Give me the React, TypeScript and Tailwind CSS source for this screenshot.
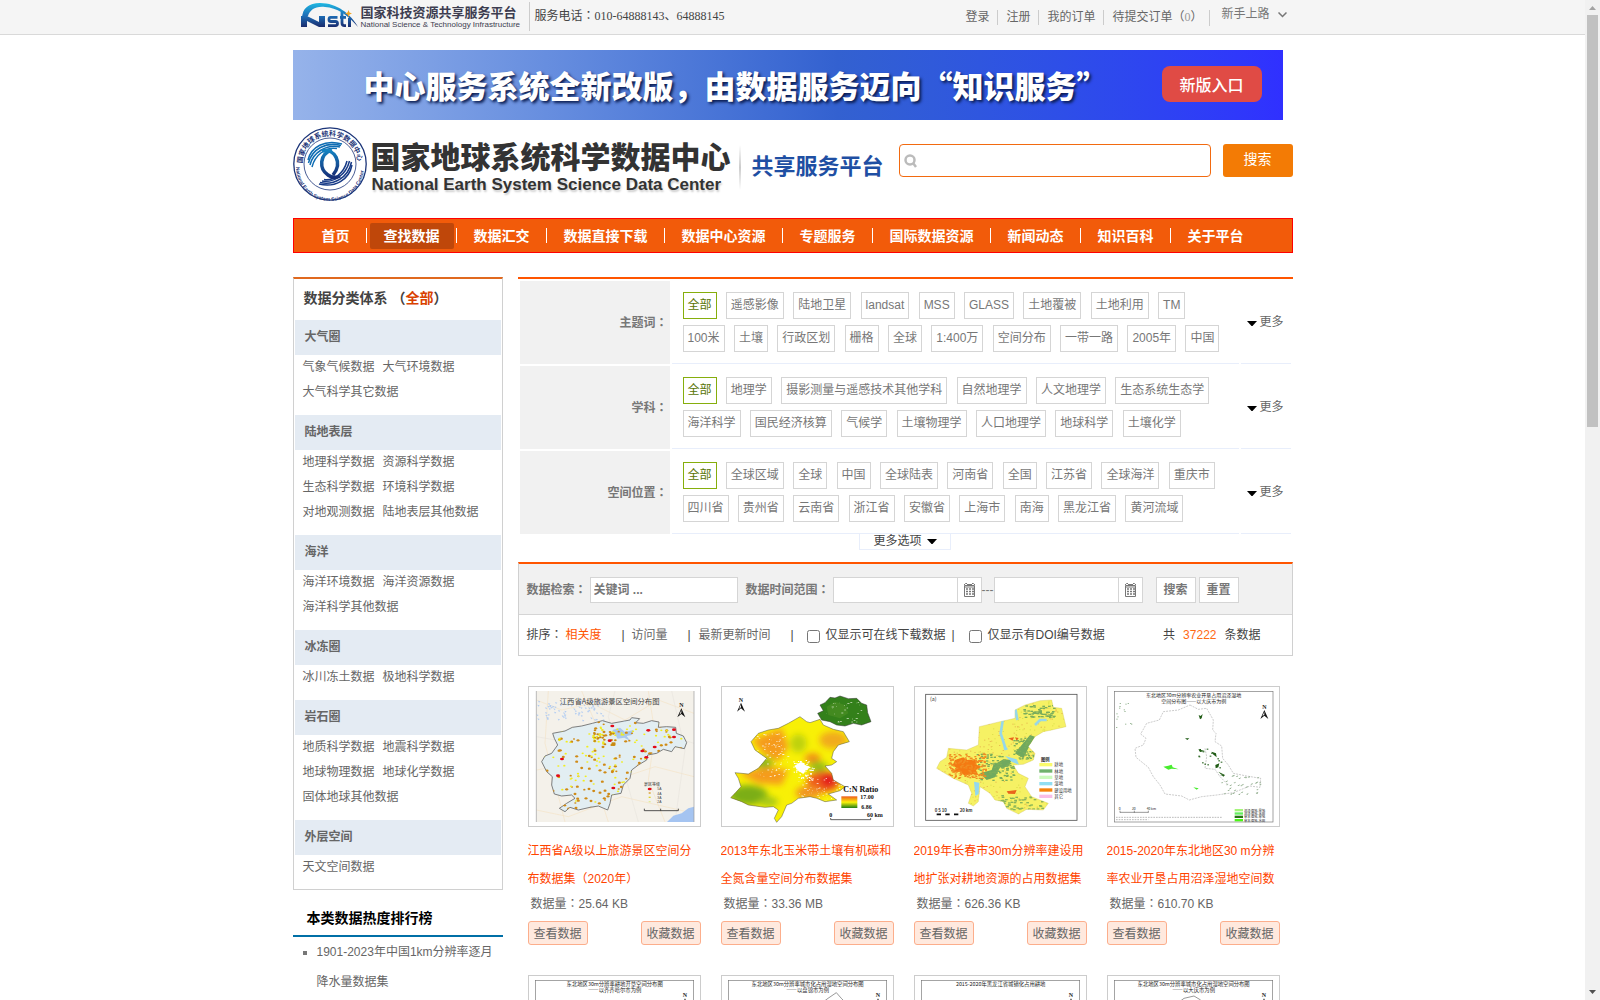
import React from "react";

function dots(seed: number, n: number, x: number, y: number, w: number, h: number) {
  let s = seed;
  const next = () => {
    s = (s * 16807) % 2147483647;
    return s / 2147483647;
  };
  return Array.from({ length: n }, () => [Math.round(x + next() * w), Math.round(y + next() * h), next()]);
}

const sans = "font-['Liberation_Sans','Noto_Sans_CJK_SC',sans-serif]";
const serif = "font-['Liberation_Serif','Noto_Sans_CJK_SC',serif]";
const cjk = "font-['Noto_Sans_CJK_SC',sans-serif]";

const nav = ["首页", "查找数据", "数据汇交", "数据直接下载", "数据中心资源", "专题服务", "国际数据资源", "新闻动态", "知识百科", "关于平台"];

const categories: { name: string; items: string[] }[] = [
  { name: "大气圈", items: ["气象气候数据", "大气环境数据", "大气科学其它数据"] },
  { name: "陆地表层", items: ["地理科学数据", "资源科学数据", "生态科学数据", "环境科学数据", "对地观测数据", "陆地表层其他数据"] },
  { name: "海洋", items: ["海洋环境数据", "海洋资源数据", "海洋科学其他数据"] },
  { name: "冰冻圈", items: ["冰川冻土数据", "极地科学数据"] },
  { name: "岩石圈", items: ["地质科学数据", "地震科学数据", "地球物理数据", "地球化学数据", "固体地球其他数据"] },
  { name: "外层空间", items: ["天文空间数据"] },
];

const filters: { label: string; rows: string[][] }[] = [
  {
    label: "主题词：",
    rows: [
      ["全部", "遥感影像", "陆地卫星", "landsat", "MSS", "GLASS", "土地覆被", "土地利用", "TM"],
      ["100米", "土壤", "行政区划", "栅格", "全球", "1:400万", "空间分布", "一带一路", "2005年", "中国"],
    ],
  },
  {
    label: "学科：",
    rows: [
      ["全部", "地理学", "摄影测量与遥感技术其他学科", "自然地理学", "人文地理学", "生态系统生态学"],
      ["海洋科学", "国民经济核算", "气候学", "土壤物理学", "人口地理学", "地球科学", "土壤化学"],
    ],
  },
  {
    label: "空间位置：",
    rows: [
      ["全部", "全球区域", "全球", "中国", "全球陆表", "河南省", "全国", "江苏省", "全球海洋", "重庆市"],
      ["四川省", "贵州省", "云南省", "浙江省", "安徽省", "上海市", "南海", "黑龙江省", "黄河流域"],
    ],
  },
];

function NstiMark() {
  return (
    <svg width="60" height="26" viewBox="0 0 60 26" aria-label="Nsti" role="img">
      <defs>
        <linearGradient id="nsti" gradientUnits="userSpaceOnUse" x1="0" y1="0" x2="0" y2="25">
          <stop offset="0" stopColor="#1fb8e2" />
          <stop offset=".5" stopColor="#1d6fb8" />
          <stop offset="1" stopColor="#1a2566" />
        </linearGradient>
      </defs>
      <path d="M1 16 C1 5 8 0 19 0 C36 0 50 11 57 24 C46 11 36 5 24 4 C14 3 9 7 7 13 Z" fill="url(#nsti)" />
      <path d="M0 13 H6 L18 19 V13 H24 V24 H18 L6 18 V24 H0 Z" fill="url(#nsti)" />
      <path d="M36.500 14.400 H29.500 Q28 14.400 28 16.400 Q28 18.500 30 18.500 H34.500 Q36.500 18.500 36.500 20.600 Q36.500 22.600 34.500 22.600 H27" fill="none" stroke="url(#nsti)" strokeWidth="2.800" />
      <path d="M41 9 V20 Q41 22.600 43.500 22.600 H45 M39 14.400 H45" fill="none" stroke="url(#nsti)" strokeWidth="2.800" />
      <path d="M47 15 H50 V24 H47 Z" fill="url(#nsti)" />
      <path d="M47.500 7 L48.500 9.500 L51 10.500 L48.500 11.500 L47.500 14 L46.500 11.500 L44 10.500 L46.500 9.500 Z" fill="#f5a623" />
    </svg>
  );
}

function Emblem() {
  return (
    <svg width="74" height="74" viewBox="0 0 74 74" role="img" aria-label="国家地球系统科学数据中心" className="shrink-0 overflow-visible">
      <defs>
        <linearGradient id="globe" x1="0" y1="0" x2="0" y2="1">
          <stop offset="0" stopColor="#1583c2" />
          <stop offset="1" stopColor="#152e78" />
        </linearGradient>
        <path id="arcTop" d="M9.500 36.500 A27.500 27.500 0 0 1 64.500 36.500 L64.500 40" />
        <path id="arcBottom" d="M3 40 A34 34 0 0 0 71 40 L71 34" />
      </defs>
      <circle cx="37" cy="37" r="36.200" fill="#fff" stroke="#1b3478" strokeWidth="1.300" />
      <circle cx="37" cy="37" r="26" fill="#fff" stroke="#1b3478" strokeWidth="0.800" />
      <text fontSize="7" fontWeight="700" fill="#1b3478" fontFamily="Noto Sans CJK SC"><textPath href="#arcTop">国家地球系统科学数据中心</textPath></text>
      <text fontSize="5" fontWeight="700" fill="#1b3478" fontFamily="Liberation Sans"><textPath href="#arcBottom">National Earth System Science Data Center</textPath></text>
      <g fill="none" stroke="#0f6db3" strokeWidth="1.500">
        <path d="M15 33 C18 20 32 12 49 17" />
        <path d="M15.500 36 C19 22 33 14.500 48 18.500" />
        <path d="M17 38 C20 25 34 17 47 20" />
        <path d="M19 40 C22 28 33 19.500 44 21.500" />
      </g>
      <g fill="none" stroke="#173a86" strokeWidth="1.500">
        <path d="M59 38 C56 53 42 61 26 57" />
        <path d="M58.500 35 C55 51 41 58.500 27 55.500" />
        <path d="M56.500 34 C53 48 41 56 29 54" />
        <path d="M54 34 C51 46 41 54 31 52.500" />
      </g>
      <path d="M39 23 C26 27 26 42 35 48 C39 51 43 51 47 49" fill="none" stroke="url(#globe)" strokeWidth="3.500" />
      <path d="M29 24 C42 21 50 36 40 48" fill="none" stroke="url(#globe)" strokeWidth="3.500" />
    </svg>
  );
}

function North({ x, y }: { x: number; y: number }) {
  return (
    <g transform={`translate(${x} ${y})`}>
      <text x="0" y="0" fontSize="18" textAnchor="middle" fill="#222" fontFamily="Liberation Serif" fontWeight="700">N</text>
      <path d="M0 3 L12 30 L0 20 L-12 30 Z M0 8 L-6 22 L0 17 Z" fill="#111" fillRule="evenodd" />
    </g>
  );
}

const jiangxi = "M113 190 L150 183 L172 172 L200 168 L232 160 L262 152 L290 160 L318 155 L345 150 L350 143 L374 146 L362 158 L385 160 L410 152 L432 156 L430 172 L455 170 L482 172 L484 190 L505 198 L515 218 L508 236 L480 230 L470 245 L445 238 L425 250 L398 255 L395 270 L370 285 L350 300 L345 325 L325 345 L318 370 L290 375 L285 400 L278 420 L250 408 L225 412 L190 420 L165 412 L150 425 L133 415 L155 400 L180 385 L170 375 L140 378 L118 372 L110 345 L112 320 L95 305 L80 275 L90 258 L110 250 L128 225 L118 205 Z";

function JiangxiMap() {
  return (
    <svg className="h-full w-full" viewBox="42 51 513 417" preserveAspectRatio="none" role="img" aria-label="江西省A级旅游景区空间分布图">
      <defs>
        <clipPath id="jx"><path d={jiangxi} /></clipPath>
        <clipPath id="jxFrame"><rect x="64" y="63" width="473" height="393" /></clipPath>
      </defs>
      <g clipPath="url(#jxFrame)">
        <rect x="64" y="63" width="473" height="393" fill="#f4f1ea" />
        <g fill="none" stroke="#f4dfba" strokeWidth="1.500">
          <path d="M64 90 L140 120 L230 100 L330 150 L430 90 L537 130 M64 300 L180 280 L300 330 L420 290 L537 320 M200 63 L250 180 L230 300 L280 456 M400 63 L420 190 L400 330 L450 456 M64 420 L160 440 L320 380 L537 430 M100 63 L90 220 L150 456" />
          <path d="M470 63 L510 240 L480 456 M64 200 L180 220 L380 170 L537 220 M300 63 L280 140 L370 456" stroke="#e4e0da" />
        </g>
        <path d="M456 456 L475 437 L500 430 L520 415 L537 410 V456 Z" fill="#a5c4f1" />
        {dots(51, 75, 64, 90, 200, 60).map(([x, y], i) => <path key={i} d={`M${x} ${y} l7 2 l-4 4`} fill="#b3cdf2" />)}
        <path d={jiangxi} fill="#e2eef2" stroke="#666" strokeWidth="2.500" />
        <g clipPath="url(#jx)">
          <path d="M292 180 L315 173 L330 186 L355 180 L350 195 L335 198 L345 212 L328 203 L308 206 Z M300 145 L325 138 L330 155 Z" fill="#a9c8ef" />
          {dots(7, 330, 82, 150, 425, 275).map(([x, y, r], i) => (
            <ellipse key={i} cx={x} cy={y} rx={r > 0.6 ? 4.5 : 3.5} ry={r > 0.6 ? 3.5 : 2.5} fill={r > 0.45 ? "#cf8a16" : "#f2ee1c"} />
          ))}
          {dots(19, 40, 235, 180, 70, 45).map(([x, y], i) => <ellipse key={i} cx={x} cy={y} rx="4" ry="3" fill={i % 3 ? "#c98a10" : "#eee81d"} />)}
        </g>
        {[[292, 168], [400, 181], [477, 179], [284, 212], [477, 201], [419, 231], [382, 243], [141, 267], [394, 262], [129, 317], [295, 354], [404, 357]].map(([x, y]) => <ellipse key={x + y} cx={x} cy={y} rx="6" ry="4" fill="#e20a17" />)}
        <text x="284" y="103" fontSize="22" textAnchor="middle" fill="#444" fontFamily="Noto Sans CJK SC">江西省A级旅游景区空间分布图</text>
        <North x={499} y={112} />
        <text x="387" y="348" fontSize="12" fill="#333" fontFamily="Noto Sans CJK SC">景区等级</text>
        {["5A", "4A", "3A", "2A"].map((t, i) => (
          <g key={t}>
            {i > 0 && <rect x="401" y={354 + i * 13} width="6" height="4" fill={["", "#d79a21", "#ddd32c", "#e4ed98"][i]} />}
            <text x="427" y={361 + i * 13} fontSize="10" fill="#444" fontFamily="Liberation Sans">{t}</text>
          </g>
        ))}
        <path d="M388 422 H490 M388 416 V422 M437 416 V422 M490 416 V422" stroke="#333" strokeWidth="2.500" />
      </g>
      <path d="M64 456 V63 M537 63 V456" stroke="#999" strokeWidth="2" />
    </svg>
  );
}

const corn = "M855 140 L875 155 L885 158 L915 148 L925 165 L955 178 L985 185 L1003 215 L970 225 L955 245 L950 265 L965 275 L950 285 L930 288 L950 310 L955 330 L990 350 L975 362 L940 372 L965 390 L930 395 L905 385 L885 380 L850 385 L830 400 L815 405 L800 440 L785 457 L778 445 L790 420 L775 410 L750 412 L700 405 L680 395 L647 383 L660 370 L678 350 L670 325 L660 308 L700 312 L730 295 L755 265 L720 240 L708 215 L730 190 L760 180 L790 175 L820 160 Z";
const cornHead = "M915 105 L930 98 L945 82 L960 84 L975 78 L1000 86 L1025 85 L1040 100 L1055 105 L1058 128 L1068 155 L1040 165 L1015 160 L990 168 L965 165 L945 155 L920 150 L908 130 L925 122 Z";

function CornBeltMap() {
  return (
    <svg className="h-full w-full" viewBox="621 51 513 417" preserveAspectRatio="none" role="img" aria-label="C:N Ratio">
      <defs>
        <clipPath id="cb"><path d={corn} /></clipPath>
        <filter id="soft"><feGaussianBlur stdDeviation="9" /></filter>
        <linearGradient id="ratio" x1="0" y1="0" x2="0" y2="1">
          <stop offset="0" stopColor="#ef5a1a" /><stop offset=".5" stopColor="#fbf20a" /><stop offset="1" stopColor="#1f7d14" />
        </linearGradient>
      </defs>
      <path d={cornHead} fill="#33801a" stroke="#333" strokeWidth="1.500" />
      <path d="M935 110 L960 95 L990 105 L1000 130 L975 145 L940 135 Z" fill="#438a20" />
      <g clipPath="url(#cb)">
        <rect x="640" y="130" width="370" height="330" fill="#f8f006" />
        <g filter="url(#soft)">
          <path d="M710 210 L800 175 L820 230 L790 275 L745 250 Z M670 310 L760 290 L820 300 L800 345 L730 340 Z" fill="#f59b1b" />
          <ellipse cx="955" cy="210" rx="42" ry="26" fill="#f1ab1c" />
          <ellipse cx="893" cy="265" rx="24" ry="15" fill="#f08d18" />
          <ellipse cx="925" cy="335" rx="50" ry="32" fill="#ee5b1e" />
          <ellipse cx="940" cy="330" rx="22" ry="20" fill="#e3171b" />
          <ellipse cx="880" cy="368" rx="38" ry="20" fill="#f19422" />
          <ellipse cx="700" cy="375" rx="58" ry="30" fill="#7cae15" />
          <ellipse cx="745" cy="278" rx="30" ry="15" fill="#84b71a" />
          <ellipse cx="850" cy="220" rx="25" ry="28" fill="#bfd20d" />
          <ellipse cx="910" cy="290" rx="28" ry="15" fill="#8fc016" />
          <ellipse cx="760" cy="395" rx="30" ry="15" fill="#a6c812" />
        </g>
        <path d="M838 288 L858 275 L870 285 L888 292 L872 300 L865 312 L850 302 Z" fill="#fff" />
        {dots(33, 60, 835, 270, 60, 60).map(([x, y], i) => <rect key={i} x={x} y={y} width="4" height="3" fill="#fff" />)}
        {dots(77, 110, 710, 190, 110, 130).map(([x, y, r], i) => <rect key={i} x={x} y={y} width={r * 6} height="2" fill="#fff" />)}
        {dots(99, 80, 850, 320, 140, 75).map(([x, y, r], i) => <rect key={i} x={x} y={y} width={r * 6} height="2" fill="#fff" />)}
      </g>
      {dots(12, 30, 935, 95, 105, 60).map(([x, y, r], i) => <rect key={i} x={x} y={y} width={r * 7} height="2" fill="#e5efd8" />)}
      <path d={corn} fill="none" stroke="#554" strokeWidth="1.500" />
      <North x={678} y={95} />
      <g fontFamily="Liberation Serif" fontWeight="700" fill="#111">
        <text x="985" y="365" fontSize="24">C:N Ratio</text>
        <text x="1036" y="388" fontSize="18">17.00</text>
        <text x="1039" y="417" fontSize="18">6.86</text>
        <text x="943" y="441" fontSize="18">0</text>
        <text x="1056" y="441" fontSize="18">60 km</text>
      </g>
      <rect x="979" y="379" width="48" height="35" fill="url(#ratio)" />
      <path d="M947 444 V449 H1067 V444" fill="none" stroke="#111" strokeWidth="2" />
    </svg>
  );
}

const changchun = "M455 90 L460 112 L485 115 L498 170 L455 180 L430 185 L405 200 L385 230 L405 250 L400 270 L370 283 L340 285 L355 310 L385 325 L375 350 L395 380 L445 400 L430 420 L380 418 L355 432 L320 415 L310 395 L285 390 L270 370 L240 350 L235 395 L220 408 L205 400 L215 370 L205 345 L160 325 L110 295 L120 275 L140 262 L145 235 L200 240 L235 225 L238 170 L300 155 L345 145 L345 120 L375 105 L420 92 Z";

function ChangchunMap() {
  const legend: [string, string][] = [["#fbfb6c", "耕地"], ["#70b26c", "林地"], ["#ccfbbd", "草地"], ["#91def2", "湿地"], ["#f5820c", "建设用地"], ["#f9bde8", "其它"]];
  return (
    <svg className="h-full w-full" viewBox="45 51 513 417" preserveAspectRatio="none" role="img" aria-label="长春市土地利用">
      <defs><clipPath id="cc"><path d={changchun} /></clipPath></defs>
      <rect x="77" y="73" width="454" height="378" fill="#fff" stroke="#555" strokeWidth="2.500" />
      <path d={changchun} fill="#f6f164" stroke="#c9bd55" />
      <g clipPath="url(#cc)">
        {dots(5, 600, 110, 90, 390, 340).map(([x, y, r], i) => <rect key={i} x={x} y={y} width="4" height="3" fill={r > 0.5 ? "#e9bf50" : "#dfe24d"} />)}
        <path d="M240 310 L275 300 L280 285 L310 268 L335 270 L325 290 L300 292 L285 322 L260 330 Z M345 250 L365 225 L390 195 L405 200 L385 235 L370 265 Z" fill="#70a95f" />
        {dots(23, 90, 230, 250, 110, 80).map(([x, y], i) => <rect key={i} x={x} y={y} width="7" height="4" fill="#7bae5b" />)}
        {dots(24, 60, 340, 200, 60, 65).map(([x, y], i) => <rect key={i} x={x} y={y} width="6" height="4" fill="#7bae5b" />)}
        {dots(28, 60, 370, 105, 90, 35).map(([x, y], i) => <rect key={i} x={x} y={y} width="8" height="4" fill="#7bae5b" />)}
        {dots(29, 60, 290, 375, 140, 45).map(([x, y], i) => <rect key={i} x={x} y={y} width="8" height="4" fill="#8ab559" />)}
        <path d="M308 152 L302 190 L310 215 L318 240 M345 110 L352 150 M405 165 L420 150 L440 150" fill="none" stroke="#97d7e8" strokeWidth="8" />
        <path d="M222 335 L238 338 L236 372 L226 378 Z M315 258 L350 268 L358 285 L335 275 Z M310 225 L325 238 L312 240 Z" fill="#93d8ef" />
        <path d="M165 270 L190 262 L200 270 L225 268 L230 285 L245 290 L228 300 L235 315 L215 312 L195 318 L180 305 L155 308 L170 295 L158 285 Z" fill="#f47a12" />
        {dots(41, 160, 145, 250, 110, 75).map(([x, y], i) => <rect key={i} x={x} y={y} width="6" height="4" fill="#f18d22" />)}
        <path d="M325 205 L342 202 L338 212 Z M345 202 L356 204 L350 212 Z M320 364 L350 360 L345 372 L325 371 Z" fill="#e9651d" />
      </g>
      <g fontFamily="Noto Sans CJK SC" fill="#333" fontSize="13">
        <text x="90" y="94" fontSize="16">(a)</text>
        <text x="423" y="273" fontWeight="700">图例</text>
        {legend.map(([c, t], i) => (
          <g key={t}>
            <rect x="418" y={279 + i * 19} width="39" height="10" fill={c} />
            <text x="463" y={289 + i * 19}>{t}</text>
          </g>
        ))}
        <text x="104" y="426" fontWeight="700">0 5 10</text>
        <text x="179" y="426" fontWeight="700">20 km</text>
      </g>
      <path d="M110 433 H187" stroke="#111" strokeWidth="5" strokeDasharray="13 13" />
    </svg>
  );
}

function WetlandMap() {
  return (
    <svg className="h-full w-full" viewBox="624 51 513 417" preserveAspectRatio="none" role="img" aria-label="东北地区湿地空间分布图">
      <rect x="643" y="64" width="476" height="392" fill="#fff" stroke="#777" strokeWidth="2" />
      <path d="M870 105 L895 118 L920 115 L940 150 L938 180 L948 190 L945 215 L965 228 L968 265 L985 285 L1000 310 L1040 318 L1082 325 L1080 352 L1050 348 L1000 368 L950 375 L905 380 L868 390 L845 378 L795 372 L780 345 L760 320 L745 292 L708 262 L705 235 L730 225 L738 205 L722 192 L740 160 L778 150 L790 125 L835 120 Z M915 235 L920 260 L915 295 L945 298 L960 320 L985 345" fill="none" stroke="#999" strokeWidth="1.500" strokeDasharray="6 3" />
      <g fill="#1f5b14">
        <path d="M896 135 L902 138 L908 132 L905 145 L900 148 Z M855 205 L868 205 L862 210 Z M895 238 L915 243 L900 246 Z M935 245 L948 250 L950 262 L938 252 Z M946 285 L958 280 L955 292 L947 295 Z M955 305 L975 315 L970 320 Z" />
        {dots(61, 35, 960, 315, 120, 60).map(([x, y], i) => <path key={i} d={`M${x} ${y} l8 -4 l-3 5 Z`} fill="#8aa886" />)}
        {dots(64, 14, 895, 230, 70, 65).map(([x, y], i) => <rect key={i} x={x} y={y} width="5" height="3" />)}
        {dots(68, 14, 648, 95, 50, 80).map(([x, y], i) => <rect key={i} x={x} y={y} width="4" height="3" fill="#9fbb9c" />)}
      </g>
      <path d="M790 290 L805 287 L815 284 L818 292 L836 298 L815 296 L805 299 Z M880 352 L896 355 L890 359 Z" fill="#48ec2e" />
      <g fontFamily="Noto Sans CJK SC" fill="#222" fontSize="15" textAnchor="middle">
        <text x="881" y="81">东北地区30m分辨率农业开垦占用沼泽湿地</text>
        <text x="881" y="99">空间分布图——以大庆市为例</text>
      </g>
      <North x={1093} y={117} />
      <g fontFamily="Noto Sans CJK SC" fill="#222" fontSize="10">
        <text x="656" y="419">0</text><text x="696" y="419">20</text><text x="740" y="419">40 km</text>
        {["沼泽湿地-旱地", "沼泽湿地-水田", "草本湿地-旱地", "草本湿地-水田"].map((t, i) => (
          <g key={t}>
            <rect x="1004" y={417 + i * 10} width="25" height="7" fill={["#a4f57b", "#65ef5f", "#267413", "#4af615"][i]} />
            <text x="1032" y={425 + i * 10}>{t}</text>
          </g>
        ))}
      </g>
      <path d="M660 427 H745 M660 422 V428 M703 422 V428 M745 422 V428" stroke="#333" strokeWidth="1.500" />
      <path d="M648 442 H965 M648 449 H745" stroke="#777" strokeWidth="1.500" strokeDasharray="5 3" />
    </svg>
  );
}

function SheetMap({ lines, label, outline }: { lines: string[]; label: string; outline?: string }) {
  return (
    <svg className="h-full w-full" viewBox="42 918 513 417" preserveAspectRatio="none" role="img" aria-label={label}>
      <rect x="61" y="931" width="475" height="392" fill="#fff" stroke="#777" strokeWidth="2" />
      {outline && <path d={outline} fill="none" stroke="#333" strokeWidth="1.500" />}
      <g fontFamily="Noto Sans CJK SC" fill="#222" fontSize="16" textAnchor="middle">
        {lines.map((t, i) => <text key={t} x="299" y={948 + i * 18}>{t}</text>)}
      </g>
      <North x={510} y={982} />
    </svg>
  );
}

const cards: { title: string; size: string; map: React.ReactNode }[] = [
  { title: "江西省A级以上旅游景区空间分布数据集（2020年）", size: "25.64 KB", map: <JiangxiMap /> },
  { title: "2013年东北玉米带土壤有机碳和全氮含量空间分布数据集", size: "33.36 MB", map: <CornBeltMap /> },
  { title: "2019年长春市30m分辨率建设用地扩张对耕地资源的占用数据集", size: "626.36 KB", map: <ChangchunMap /> },
  { title: "2015-2020年东北地区30 m分辨率农业开垦占用沼泽湿地空间数", size: "610.70 KB", map: <WetlandMap /> },
];

const nextMaps: React.ReactNode[] = [
  <SheetMap key="a" label="齐齐哈尔市" lines={["东北地区30m分辨率耕地开垦空间分布图", "——以齐齐哈尔市为例"]} />,
  <SheetMap key="b" label="盘锦市" lines={["东北地区30m分辨率城市化占用湿地空间分布图", "——以盘锦市为例"]} outline="M340 1000 L360 985 L385 968 L400 985 L415 1000" />,
  <SheetMap key="c" label="黑龙江省" lines={["2015-2020年黑龙江省城镇化占用耕地"]} />,
  <SheetMap key="d" label="大庆市" lines={["东北地区30m分辨率城市化占用湿地空间分布图", "——以大庆市为例"]} outline="M250 1000 L270 985 L300 978 L320 990" />,
];

function Caret() {
  return <svg width="10" height="5" viewBox="0 0 10 5" className="mt-[2px] shrink-0"><path d="M0 0 H10 L5.500 5 H4.500 Z" fill="#000" /></svg>;
}

function CalendarButton({ label }: { label: string }) {
  return (
    <button type="button" aria-label={label} className="flex h-[26px] w-[25px] items-center justify-center border border-[#d5d5d5] bg-white">
      <svg width="13" height="14" viewBox="0 0 13 14">
        <path d="M1.500 2.500 H11.500 V13.500 H1.500 Z" fill="none" stroke="#777" />
        <path d="M1 2 L2.500 0.500 H4 M4 1.500 H9 M9 0.500 H10.500 L12 2 M1 4 H12" fill="none" stroke="#777" />
        <path d="M3 6 H5 M6 6 H8 M9 6 H11 M3 8.500 H5 M6 8.500 H8 M9 8.500 H11 M3 11 H5 M6 11 H8 M9 11 H11" stroke="#777" strokeWidth="1.500" />
      </svg>
    </button>
  );
}

function TopBar() {
  return (
    <div className="border-b border-[#d9d9d9] bg-[#f5f5f5]">
      <div className={`mx-auto flex h-[34px] w-[1000px] text-[12px] leading-[20px] text-[#555] ${serif}`}>
        <a href="#" className="ml-2 mt-[3px] flex h-[26px] w-[228px]">
          <NstiMark />
          <span className={`flex flex-col whitespace-nowrap text-[#3d3d50] ${cjk}`}>
            <b className="text-[13px] leading-[17px]">国家科技资源共享服务平台</b>
            <span className="font-['Liberation_Sans'] text-[8px] leading-[9px]">National Science &amp; Technology Infrastructure</span>
          </span>
        </a>
        <span className="mt-[2px] h-[29px] w-px bg-[#ccc]" />
        <span className="ml-[5px] mt-[6px] text-[#444]"><span lang="zh-Hant">服务电话：</span>010-64888143、64888145</span>
        <div className="ml-auto flex text-[#666]">
          <div className="mt-[10px] flex h-[15px] divide-x divide-[#ccc] leading-[14px]">
            <a href="#" className="pr-[8px]">登录</a>
            <a href="#" className="px-[8px]">注册</a>
            <a href="#" className="px-[8px]">我的订单</a>
            <a href="#" lang="zh-Hant" className="pl-[8px] pr-[7px]">待提交订单（<span className="text-[#999]">0</span>）</a>
          </div>
          <a href="#" className="flex items-start pt-[4px] text-[#777]">
            <span className="mt-[6px] h-[16px] w-px bg-[#ccc]" />
            <span className="ml-[11px]">新手上路</span>
            <svg width="9" height="6" viewBox="0 0 9 6" className="ml-[8px] mr-[6px] mt-[8px]"><path d="M0.500 0.500 L4.500 4.500 L8.500 0.500" fill="none" stroke="#777" strokeWidth="1.500" /></svg>
          </a>
        </div>
      </div>
    </div>
  );
}

function Header() {
  return (
    <header>
      <a href="#" className={`mt-[15px] mr-[10px] flex h-[70px] items-center justify-between bg-linear-to-r from-[#96b3ea] via-[#3361d0] via-55% to-[#3030ff] pl-[71px] pr-[21px] text-white ${cjk}`}>
        <span className="whitespace-nowrap text-[31px] font-black [text-shadow:2px_2px_3px_#0a1c50]">中心服务系统全新改版，由数据服务迈向“知识服务”</span>
        <span className="mb-[2px] flex h-[36px] w-[100px] shrink-0 items-center justify-center rounded-lg bg-[#e04b45] text-[16px] font-medium">新版入口</span>
      </a>
      <div className="mt-[7px] flex h-[74px]">
        <Emblem />
        <h1 className={`ml-1 mt-[10px] whitespace-nowrap text-[#333] ${cjk}`}>
          <span className="block text-[30px] font-black leading-[36px]">国家地球系统科学数据中心</span>
          <span className="ml-px block font-['Liberation_Sans'] text-[17px] font-bold leading-[24px] [text-shadow:1px_2px_2px_#ccc]">National Earth System Science Data Center</span>
        </h1>
        <span className="ml-[8px] mt-[18px] h-[45px] w-[2px] bg-linear-to-b from-white via-[#ccc] to-white" />
        <span className={`ml-[11px] mt-[21px] whitespace-nowrap text-[22px] font-bold leading-[32px] text-[#1f4fa3] ${cjk}`}>共享服务平台</span>
        <form className="ml-auto mt-[17px] flex h-[33px] gap-3">
          <label className="flex w-[312px] items-center rounded-[4px] border border-[#f26a10] pl-1">
            <svg width="14" height="14" viewBox="0 0 14 14"><circle cx="6" cy="6" r="4.500" fill="none" stroke="#bbb" strokeWidth="2.500" /><path d="M9 9 L12 13" stroke="#bbb" strokeWidth="2.500" /></svg>
            <input aria-label="搜索" className="ml-2 min-w-0 flex-1 text-[14px] outline-none" />
          </label>
          <button type="button" className="w-[70px] rounded-[3px] bg-[#f37b05] pb-[2px] text-[14px] text-white">搜索</button>
        </form>
      </div>
      <nav className="mt-[17px] flex h-[35px] items-center border border-[#f00] bg-[#f25b0a] pl-[11px] text-[14px] font-bold text-white">
        {nav.map((item, i) => (
          <React.Fragment key={item}>
            {i > 0 && <span className="h-[15px] w-px bg-white" />}
            <a href="#" className={item === "查找数据" ? "ml-[3px] mr-[2px] rounded-[2px] bg-[#bf470a] px-[14px] leading-[26px]" : "ml-[3px] mr-[2px] px-[14px] leading-[26px]"}>{item}</a>
          </React.Fragment>
        ))}
      </nav>
    </header>
  );
}

function Sidebar() {
  return (
    <aside className="w-[210px] shrink-0">
      <section className="border border-t-2 border-[#d0d0d0] border-t-[#e0691f] px-px pb-[9px] text-[12px] text-[#666]">
        <h2 className="h-[41px] pl-[9px] text-[14px] font-bold leading-[38px] text-[#444]">数据分类体系 （<a href="#" className="text-[#d94200]">全部</a>）</h2>
        {categories.map((c, i) => (
          <div key={c.name} className={i > 0 ? "mt-[10px]" : ""}>
            <h3 className="h-[35px] bg-[#e4ebf3] pl-[10px] font-bold leading-[35px]">{c.name}</h3>
            <div className="flex flex-wrap gap-x-2 pl-2 leading-[25px]">
              {c.items.map((t) => <a key={t} href="#">{t}</a>)}
            </div>
          </div>
        ))}
      </section>
      <h2 className="mt-[12px] border-b-2 border-[#006fa6] pl-[14px] text-[14px] font-bold leading-[33px] text-black">本类数据热度排行榜</h2>
      <ul className="text-[12px] leading-[30px] text-[#666]">
        <li className="flex pl-[10px]">
          <span className="mt-[14px] h-[4px] w-[4px] shrink-0 bg-[#777]" />
          <a href="#" className="ml-[10px] w-[180px]">1901-2023年中国1km分辨率逐月降水量数据集</a>
        </li>
      </ul>
    </aside>
  );
}

function Filters() {
  return (
    <section className="border-t-2 border-[#ff5500] text-[12px] text-[#777]">
      <table className="w-full border-separate border-spacing-[2px]">
        <tbody>
          {filters.map((f) => (
            <tr key={f.label}>
              <th lang="zh-Hant" className="h-[83px] w-[150px] bg-[#f1f1f1] pr-[2px] text-right font-bold">{f.label}</th>
              <td className="border-b border-[#e8eefb] pl-[11px] pt-[2px]">
                {f.rows.map((row, r) => (
                  <div key={r} className="h-[33px] whitespace-nowrap pt-[2px] leading-[25px]">
                    {row.map((t) => (
                      <React.Fragment key={t}>
                        <a href="#" className={t === "全部" ? "mr-[6px] inline-block border border-[#86ae0c] px-1 text-[#587403]" : "mr-[6px] inline-block border border-[#d5d5d5] px-1"}>{t}</a>{" "}
                      </React.Fragment>
                    ))}
                  </div>
                ))}
              </td>
              <td className="w-[50px] border-b border-[#e8eefb]">
                <button type="button" className="ml-[6px] flex items-center gap-[3px] text-[#666]"><Caret />更多</button>
              </td>
            </tr>
          ))}
        </tbody>
      </table>
      <button type="button" className="mx-auto -mt-[2px] flex h-[16px] w-[92px] items-center justify-center gap-[5px] border border-t-0 border-[#e8eefb] pb-[2px] text-[#444]">更多选项<Caret /></button>
    </section>
  );
}

function SearchPanel() {
  const field = "h-[26px] border border-[#d5d5d5] bg-white px-[3px] text-[12px] font-bold placeholder:text-[#777] outline-none";
  return (
    <section className="mt-[12px] border border-t-2 border-[#d0d0d0] border-t-[#ff5500] text-[12px] text-[#444]">
      <form className="flex h-[51px] items-center border-b border-[#d5d5d5] bg-[#f1f1f1] pl-2 pt-[2px] font-bold text-[#777]">
        <label htmlFor="kw" lang="zh-Hant" className="w-[63px]">数据检索：</label>
        <input id="kw" placeholder="关键词 ..." className={`w-[148px] ${field}`} />
        <label htmlFor="from" lang="zh-Hant" className="ml-2 w-[87px]">数据时间范围：</label>
        <input id="from" className={`w-[125px] ${field}`} />
        <span className="-ml-px"><CalendarButton label="开始日期" /></span>
        <span className="font-normal">---</span>
        <input aria-label="结束时间" className={`w-[125px] ${field}`} />
        <span className="-ml-px"><CalendarButton label="结束日期" /></span>
        <button type="button" className="ml-[13px] h-[26px] w-[40px] border border-[#d5d5d5] bg-white">搜索</button>
        <button type="button" className="ml-[3px] h-[26px] w-[40px] border border-[#d5d5d5] bg-white">重置</button>
      </form>
      <div className="flex h-[40px] items-center pl-2">
        <span lang="zh-Hant" className="w-[39px]">排序：</span>
        <a href="#" className="w-[56px] text-[#ff5500]">相关度</a>
        <span className="w-[10px]">|</span>
        <a href="#" className="w-[56px] text-[#666]">访问量</a>
        <span className="w-[11px]">|</span>
        <a href="#" className="w-[92px] text-[#666]">最新更新时间</a>
        <span className="w-[16px]">|</span>
        <label className="flex items-center"><input type="checkbox" className="mr-[6px] mt-[3px] h-[13px] w-[13px]" />仅显示可在线下载数据</label>
        <span className="ml-[6px] w-[17px]">|</span>
        <label className="flex items-center"><input type="checkbox" className="mr-[6px] mt-[3px] h-[13px] w-[13px]" />仅显示有DOI编号数据</label>
        <span className="ml-auto mr-[31px]">共<span className="mx-[8px] text-[#ff6a13]">37222</span>条数据</span>
      </div>
    </section>
  );
}

function Results() {
  const btn = "h-[24px] w-[60px] rounded-[3px] border border-[#fcae8c] bg-[#ffe9de] pt-px text-[#666]";
  return (
    <section className="ml-[10px] mt-[30px] grid grid-cols-[repeat(4,173px)] gap-x-5 gap-y-[30px] text-[12px]">
      {cards.map((c) => (
        <article key={c.title}>
          <a href="#" className="block h-[141px] border border-[#ccc]">{c.map}</a>
          <a href="#" className="mt-[10px] block h-[56px] overflow-hidden leading-[28px] text-[#ff4400]">{c.title}</a>
          <p lang="zh-Hant" className="pl-[3px] leading-[22px] text-[#666]">数据量：{c.size}</p>
          <div className="mt-[6px] flex justify-between">
            <button type="button" className={btn}>查看数据</button>
            <button type="button" className={btn}>收藏数据</button>
          </div>
        </article>
      ))}
      {nextMaps.map((m, i) => <a key={i} href="#" className="block h-[141px] border border-[#ccc]">{m}</a>)}
    </section>
  );
}

export default function App() {
  return (
    <div lang="zh-Hans" className={`flex h-screen overflow-hidden bg-white ${sans}`}>
      <div className="min-w-0 flex-1 overflow-y-auto [scrollbar-width:none]">
        <TopBar />
        <main className="mx-auto w-[1000px]">
          <Header />
          <div className="mt-[24px] flex gap-[15px]">
            <Sidebar />
            <div className="min-w-0 flex-1">
              <Filters />
              <SearchPanel />
              <Results />
            </div>
          </div>
        </main>
      </div>
      <div aria-hidden="true" className="flex w-[15px] shrink-0 flex-col items-center bg-[#f1f1f1]">
        <svg width="15" height="15" viewBox="0 0 15 15"><path d="M4 10 L7.500 6 L11 10 Z" fill="#a3a3a3" /></svg>
        <span className="h-[412px] w-[11px] bg-[#c1c1c1]" />
        <svg width="15" height="15" viewBox="0 0 15 15" className="mt-auto"><path d="M4 5 L7.500 9 L11 5 Z" fill="#505050" /></svg>
      </div>
    </div>
  );
}
